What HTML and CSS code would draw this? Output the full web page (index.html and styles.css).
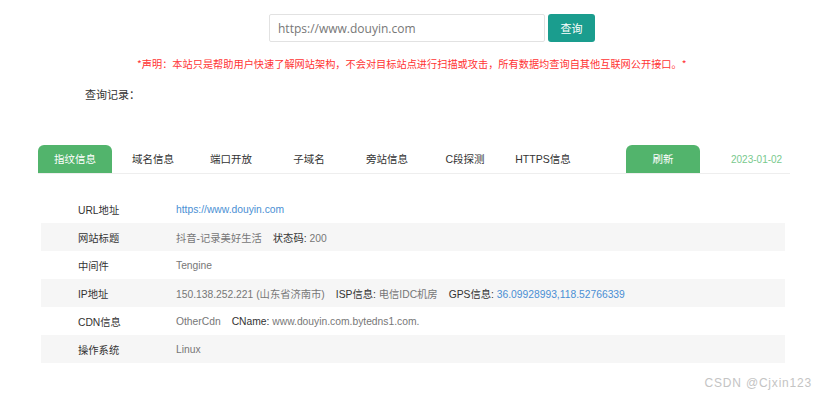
FILE: index.html
```html
<!DOCTYPE html>
<html lang="zh-CN">
<head>
    <meta charset="UTF-8">
    <title>网站信息查询</title>
    <link rel="stylesheet" href="styles.css">
</head>
<body>
    <div class="page">
        <div class="search">
            <input class="search-input" type="text" placeholder="https://www.douyin.com">
            <button class="search-btn">查询</button>
        </div>

        <p class="notice">*声明：本站只是帮助用户快速了解网站架构，不会对目标站点进行扫描或攻击，所有数据均查询自其他互联网公开接口。*</p>

        <div class="history">查询记录：</div>

        <div class="panel">
            <div class="tabs">
                <div class="tab active">指纹信息</div>
                <div class="tab">域名信息</div>
                <div class="tab">端口开放</div>
                <div class="tab">子域名</div>
                <div class="tab">旁站信息</div>
                <div class="tab">C段探测</div>
                <div class="tab">HTTPS信息</div>
                <div class="tab refresh">刷新</div>
                <div class="date">2023-01-02</div>
            </div>

            <div class="info">
                <div class="row">
                    <div class="label">URL地址</div>
                    <div class="value"><span class="link">https://www.douyin.com</span></div>
                </div>
                <div class="row">
                    <div class="label">网站标题</div>
                    <div class="value">抖音-记录美好生活<b>状态码:</b> 200</div>
                </div>
                <div class="row">
                    <div class="label">中间件</div>
                    <div class="value">Tengine</div>
                </div>
                <div class="row">
                    <div class="label">IP地址</div>
                    <div class="value">150.138.252.221 (山东省济南市)<b>ISP信息:</b> 电信IDC机房<b>GPS信息:</b> <span class="link">36.09928993,118.52766339</span></div>
                </div>
                <div class="row">
                    <div class="label">CDN信息</div>
                    <div class="value">OtherCdn<b>CName:</b> www.douyin.com.bytedns1.com.</div>
                </div>
                <div class="row">
                    <div class="label">操作系统</div>
                    <div class="value">Linux</div>
                </div>
            </div>
        </div>

        <div class="mark">CSDN @Cjxin123</div>
    </div>
</body>
</html>
```

FILE: styles.css
```css
/* Global */
html, body {
    margin: 0;
    padding: 0;
    background: #fff;
    font-family: "Liberation Sans", Arial, "Noto Sans CJK SC", sans-serif;
    color: #333;
}

.page {
    width: 831px;
    height: 398px;
    position: relative;
    overflow: hidden;
}

/* Search */
.search {
    display: flex;
    padding: 14px 0 0 269px;
}

.search-input {
    width: 276px;
    height: 28px;
    box-sizing: border-box;
    border: 1px solid #e2e2e2;
    border-radius: 2px;
    padding: 0 8px;
    font-family: "Open Sans", "Noto Sans CJK SC", sans-serif;
    font-size: 12px;
    color: #555;
    outline: none;
}

.search-input::placeholder {
    color: #777;
}

.search-btn {
    margin-left: 3px;
    width: 47px;
    height: 28px;
    border: none;
    border-radius: 3px;
    background-color: #1a9d8e;
    color: #fff;
    font-family: "Noto Sans CJK SC", sans-serif;
    font-size: 11px;
    padding: 0;
}

.notice {
    margin: 14px 0 0;
    padding-left: 137px;
    color: #f33;
    font-family: "Noto Sans CJK SC", sans-serif;
    font-size: 10.2px;
    line-height: 16px;
}

.history {
    margin-top: 14px;
    padding-left: 85px;
    font-family: "Noto Sans CJK SC", sans-serif;
    font-size: 11px;
    line-height: 16px;
    color: #333;
}

/* Tabs */
.panel {
    margin: 43px 0 0 38px;
    width: 752px;
}

.tabs {
    display: flex;
    align-items: center;
    height: 28px;
    border-bottom: 1px solid #eee;
}

.tab {
    width: 74px;
    height: 28px;
    margin-right: 4px;
    line-height: 28px;
    text-align: center;
    font-size: 10.5px;
    color: #333;
    border-radius: 6px 6px 0 0;
}

.tab.active, .tab.refresh {
    background-color: #52b46c;
    color: #fff;
}

.tab.refresh {
    margin-left: 42px;
}

.date {
    margin-left: 27px;
    font-size: 10px;
    color: #79c98d;
}

/* Info table */
.info {
    margin: 21px 5px 0 3px;
}

.row {
    display: flex;
    height: 28px;
    align-items: center;
    font-size: 10.3px;
}

.row:nth-child(even) {
    background-color: #f6f6f6;
}

.label {
    width: 98px;
    padding-left: 37px;
    color: #333;
}

.value {
    color: #777;
}

.value b {
    font-weight: normal;
    color: #333;
    margin-left: 11px;
}

.link {
    color: #4a8fd4;
}

.mark {
    position: absolute;
    right: 19px;
    bottom: 8px;
    font-size: 12px;
    letter-spacing: 0.8px;
    color: #c4c4c4;
}
```
